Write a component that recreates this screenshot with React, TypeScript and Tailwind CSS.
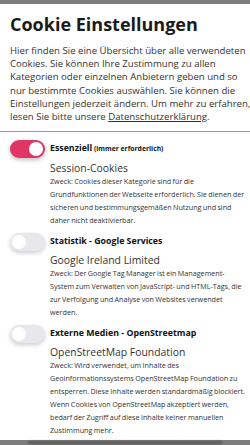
export default function App() {
  const groups = [
    {
      title: "Essenziell",
      note: "(immer erforderlich)",
      on: true,
      vendor: "Session-Cookies",
      lines: [
        "Zweck: Cookies dieser Kategorie sind für die",
        "Grundfunktionen der Webseite erforderlich. Sie dienen der",
        "sicheren und bestimmungsgemäßen Nutzung und sind",
        "daher nicht deaktivierbar.",
      ],
    },
    {
      title: "Statistik - Google Services",
      on: false,
      vendor: "Google Ireland Limited",
      lines: [
        "Zweck: Der Google Tag Manager ist ein Management-",
        "System zum Verwalten von JavaScript- und HTML-Tags, die",
        "zur Verfolgung und Analyse von Websites verwendet",
        "werden.",
      ],
    },
    {
      title: "Externe Medien - OpenStreetmap",
      on: false,
      vendor: "OpenStreetMap Foundation",
      lines: [
        "Zweck: Wird verwendet, um Inhalte des",
        "Geoinformationssystems OpenStreetMap Foundation zu",
        "entsperren. Diese Inhalte werden standardmäßig blockiert.",
        "Wenn Cookies von OpenStreetMap akzeptiert werden,",
        "bedarf der Zugriff auf diese Inhalte keiner manuellen",
        "Zustimmung mehr.",
      ],
    },
  ];

  const intro = [
    "Hier finden Sie eine Übersicht über alle verwendeten",
    "Cookies. Sie können Ihre Zustimmung zu allen",
    "Kategorien oder einzelnen Anbietern geben und so",
    "nur bestimmte Cookies auswählen. Sie können die",
    "Einstellungen jederzeit ändern. Um mehr zu erfahren,",
  ];

  return (
    <div className="flex h-[445px] w-[250px] flex-col overflow-hidden bg-[#7d7d7d] pt-1 font-['Open_Sans',sans-serif] text-[#222]">
      <div className="h-[436px] shrink-0 overflow-hidden bg-white">
        <div className="px-[10px] pt-[7px]">
          <h2 className="text-[18px] font-bold leading-[26px] text-[#1a1a1a]">Cookie Einstellungen</h2>
          <div className="mt-[7px] text-[9.6px] leading-[13.2px] text-[#333]">
            {intro.map((l) => (
              <div key={l} className="whitespace-nowrap">{l}</div>
            ))}
            <div className="whitespace-nowrap">
              lesen Sie bitte unsere <span className="underline">Datenschutzerklärung</span>.
            </div>
          </div>
        </div>
        <div className="mt-[8px] border-t border-[#999]" />

        <div className="flex flex-col gap-[6px] px-[10px] pt-[8px]">
          {groups.map((g) => (
            <div key={g.title} className="flex gap-[5px]">
              <div
                className={
                  g.on
                    ? "flex h-[18px] w-[35px] shrink-0 items-center justify-end rounded-full bg-[#e03565] px-[2px] shadow-[0_2px_4px_rgba(0,0,0,0.25)]"
                    : "flex h-[18px] w-[35px] shrink-0 items-center justify-start rounded-full bg-[#e8e8ec] px-[2px] shadow-[0_2px_4px_rgba(0,0,0,0.2)]"
                }
              >
                <div className="h-[14px] w-[14px] rounded-full bg-white" />
              </div>
              <div className="min-w-0 flex-1">
                <div className="whitespace-nowrap text-[8.8px] font-bold leading-[16px] text-[#111]">
                  {g.title}
                  {g.note && <span className="text-[6.8px]"> {g.note}</span>}
                </div>
                <div className="mt-[4px] text-[10.4px] leading-[14px] text-[#333]">{g.vendor}</div>
                <div className="text-[7.2px] leading-[13px] text-[#333] [word-spacing:-0.5px]">
                  {g.lines.map((l) => (
                    <div key={l} className="whitespace-nowrap">{l}</div>
                  ))}
                </div>
              </div>
            </div>
          ))}
        </div>
      </div>
      {/* page behind the overlay, barely visible */}
      <div className="mx-[28px] mt-[1px] h-[3px] bg-[#3a3a3a] opacity-50 blur-[1px]" />
    </div>
  );
}
